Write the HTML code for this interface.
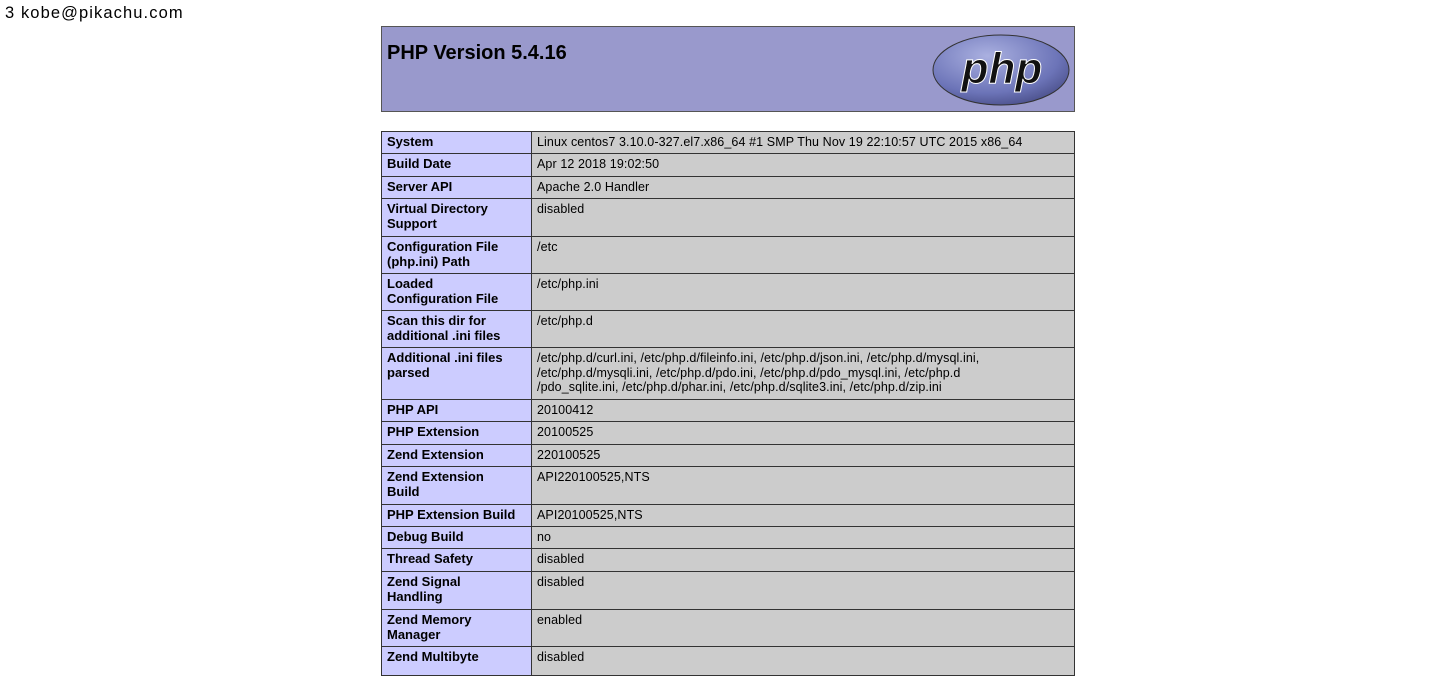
<!DOCTYPE html>
<html><head><meta charset="utf-8"><style>
body{margin:0;width:1454px;height:663px;background:#fff;overflow:hidden;position:relative;font-family:"Liberation Sans",Arial,sans-serif;color:#000}
.top{position:absolute;left:5px;top:4px;font-size:16.5px;letter-spacing:1.1px}
.hdr{position:absolute;left:381px;top:26px;width:692px;height:84px;background:#9999cc;border:1px solid #555}
.hdr h1{margin:0;position:absolute;left:5px;top:15px;font-size:20px;font-weight:bold}
.r{position:absolute;left:381px;width:694px;}
.l,.v{position:absolute;top:0;bottom:0;box-sizing:border-box;border:1px solid #333;font-size:13px;line-height:14.5px;padding:3px 4px 2px 5px}
.l{left:0;width:151px;background:#ccccff;font-weight:bold;padding-right:18px}
.v{left:150px;width:544px;background:#cccccc;font-size:12.5px;letter-spacing:0.1px}
</style></head><body>
<div class="top">3 kobe@pikachu.com</div>
<div class="hdr"><h1>PHP Version 5.4.16</h1>
<svg style="position:absolute;left:550px;top:6px" width="140" height="74" viewBox="0 0 140 74">
<defs><radialGradient id="g" cx="40%" cy="30%" r="75%"><stop offset="0" stop-color="#aab0e0"/><stop offset="0.7" stop-color="#6c74b8"/><stop offset="1" stop-color="#4a4f8a"/></radialGradient></defs>
<ellipse cx="69" cy="37" rx="68" ry="35" fill="url(#g)" stroke="#333" stroke-width="1"/>
<text x="70" y="50" text-anchor="middle" font-family="Liberation Sans" font-style="italic" font-weight="bold" font-size="44" fill="#111" stroke="#fff" stroke-width="1">php</text>
</svg></div>
<div class="r" style="top:131px;height:23px"><div class="l">System</div><div class="v">Linux centos7 3.10.0-327.el7.x86_64 #1 SMP Thu Nov 19 22:10:57 UTC 2015 x86_64</div></div>
<div class="r" style="top:153px;height:24px"><div class="l">Build Date</div><div class="v">Apr 12 2018 19:02:50</div></div>
<div class="r" style="top:176px;height:23px"><div class="l">Server API</div><div class="v">Apache 2.0 Handler</div></div>
<div class="r" style="top:198px;height:39px"><div class="l">Virtual Directory Support</div><div class="v">disabled</div></div>
<div class="r" style="top:236px;height:38px"><div class="l">Configuration File (php.ini) Path</div><div class="v">/etc</div></div>
<div class="r" style="top:273px;height:38px"><div class="l">Loaded<br>Configuration File</div><div class="v">/etc/php.ini</div></div>
<div class="r" style="top:310px;height:38px"><div class="l">Scan this dir for additional .ini files</div><div class="v">/etc/php.d</div></div>
<div class="r" style="top:347px;height:53px"><div class="l">Additional .ini files parsed</div><div class="v">/etc/php.d/curl.ini, /etc/php.d/fileinfo.ini, /etc/php.d/json.ini, /etc/php.d/mysql.ini,<br>/etc/php.d/mysqli.ini, /etc/php.d/pdo.ini, /etc/php.d/pdo_mysql.ini, /etc/php.d<br>/pdo_sqlite.ini, /etc/php.d/phar.ini, /etc/php.d/sqlite3.ini, /etc/php.d/zip.ini</div></div>
<div class="r" style="top:399px;height:23px"><div class="l">PHP API</div><div class="v">20100412</div></div>
<div class="r" style="top:421px;height:24px"><div class="l">PHP Extension</div><div class="v">20100525</div></div>
<div class="r" style="top:444px;height:23px"><div class="l">Zend Extension</div><div class="v">220100525</div></div>
<div class="r" style="top:466px;height:39px"><div class="l">Zend Extension<br>Build</div><div class="v">API220100525,NTS</div></div>
<div class="r" style="top:504px;height:23px"><div class="l" style="padding-right:2px">PHP Extension Build</div><div class="v">API20100525,NTS</div></div>
<div class="r" style="top:526px;height:23px"><div class="l">Debug Build</div><div class="v">no</div></div>
<div class="r" style="top:548px;height:24px"><div class="l">Thread Safety</div><div class="v">disabled</div></div>
<div class="r" style="top:571px;height:39px"><div class="l">Zend Signal<br>Handling</div><div class="v">disabled</div></div>
<div class="r" style="top:609px;height:38px"><div class="l">Zend Memory Manager</div><div class="v">enabled</div></div>
<div class="r" style="top:646px;height:30px"><div class="l">Zend Multibyte</div><div class="v">disabled</div></div>
</body></html>
